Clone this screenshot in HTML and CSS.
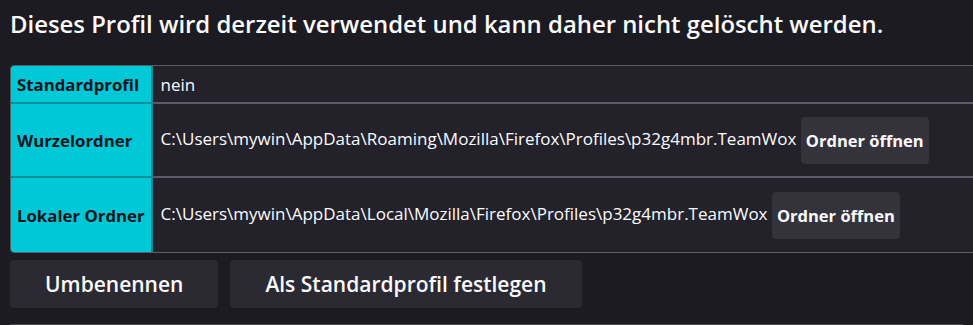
FILE: index.html
```html
<!DOCTYPE html>
<html lang="de">
<head>
    <meta charset="UTF-8">
    <title>Profile</title>
    <link rel="stylesheet" href="styles.css">
</head>
<body>
    <h2 class="notice">Dieses Profil wird derzeit verwendet und kann daher nicht gelöscht werden.</h2>

    <table class="profile">
        <tr class="row-short">
            <th>Standardprofil</th>
            <td>nein</td>
        </tr>
        <tr>
            <th>Wurzelordner</th>
            <td>C:\Users\mywin\AppData\Roaming\Mozilla\Firefox\Profiles\p32g4mbr.TeamWox <button class="open-dir">Ordner öffnen</button></td>
        </tr>
        <tr>
            <th>Lokaler Ordner</th>
            <td>C:\Users\mywin\AppData\Local\Mozilla\Firefox\Profiles\p32g4mbr.TeamWox <button class="open-dir">Ordner öffnen</button></td>
        </tr>
    </table>

    <div class="actions">
        <button class="action">Umbenennen</button>
        <button class="action">Als Standardprofil festlegen</button>
    </div>

    <div class="next-profile"></div>
</body>
</html>
```

FILE: styles.css
```css
html, body {
    overflow: hidden;
}

body {
    margin: 0;
    padding: 0 10px;
    background-color: #1c1b22;
    color: #fbfbfe;
    font-family: "Open Sans", "Noto Sans", sans-serif;
}

.notice {
    margin: 0;
    padding-top: 7px;
    height: 65px;
    box-sizing: border-box;
    font-size: 23.9px;
    font-weight: 600;
    line-height: 34px;
    white-space: nowrap;
}

.profile {
    width: 1100px;
    border-collapse: separate;
    border-spacing: 0;
    border: 1px solid #5b5b66;
    border-radius: 4px;
    overflow: hidden;
    font-size: 17px;
}

.profile th,
.profile td {
    border-bottom: 2px solid #5b5b66;
    padding: 0 8px;
    height: 74px;
    box-sizing: border-box;
}

.profile tr:last-child th,
.profile tr:last-child td {
    border-bottom: none;
}

.profile .row-short th,
.profile .row-short td {
    height: 38px;
}

.profile th {
    width: 139px;
    padding: 0 6px;
    background-color: #00c8d7;
    color: #15141a;
    border-right: 2px solid #008e99;
    border-bottom-color: #008e99;
    text-align: left;
    font-weight: 700;
    font-size: 16.8px;
    white-space: nowrap;
}

.profile td {
    background-color: #23222b;
    white-space: nowrap;
}

.open-dir {
    height: 47px;
    padding: 0 5px;
    border: none;
    border-radius: 4px;
    background-color: #34333c;
    color: #fbfbfe;
    font-family: inherit;
    font-size: 16.5px;
    font-weight: 700;
    vertical-align: middle;
}

.actions {
    display: flex;
    gap: 12px;
    margin-top: 7px;
}

.action {
    height: 48px;
    padding: 0 35px;
    border: none;
    border-radius: 4px;
    background-color: #2b2a33;
    color: #fbfbfe;
    font-family: inherit;
    font-size: 21px;
    font-weight: 600;
}

.next-profile {
    margin-top: 16px;
    border-top: 2px solid #4a4a55;
    height: 20px;
}
```
